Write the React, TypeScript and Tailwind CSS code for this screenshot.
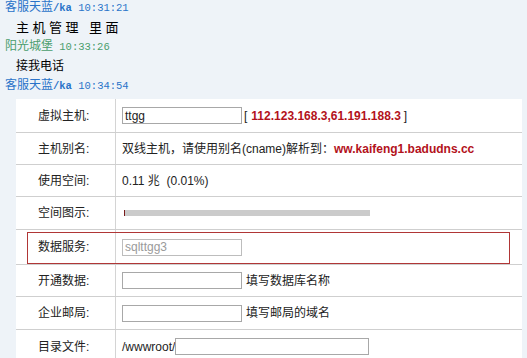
const cjk = "font-['Liberation_Sans','Noto_Sans_CJK_SC',sans-serif]";

const Field = ({ w, value, muted }: { w: string; value?: string; muted?: boolean }) => (
  <div
    className={`${w} h-[17px] bg-white border flex items-center px-[2px] text-[12px] leading-none ${
      muted ? "border-[#bdbdbd] text-[#9a9a9a]" : "border-[#a8a8a8] text-[#222]"
    }`}
  >
    {value}
  </div>
);

const Row = ({ label, h, children, last }: { label: string; h: string; children?: React.ReactNode; last?: boolean }) => (
  <div className={`grid grid-cols-[100px_1fr] ${h} ${last ? "" : "border-b border-[#cfcfcf]"}`}>
    <div className="flex items-center pl-[22px] border-r border-[#d4d4d4] text-[#222]">{label}</div>
    <div className="flex items-center pl-[6px] text-[#222]">{children}</div>
  </div>
);

export default function App() {
  return (
    <div className={`relative w-[527px] h-[358px] overflow-hidden bg-[#eef3f8] text-[12px] ${cjk}`}>
      <div className="-mt-[2px] leading-[19px]">
        <div className="pl-[5px] text-[#2a73c9]">
          客服天蓝<span className="font-['Liberation_Mono',monospace] text-[10.5px] font-bold">/ka</span>
          <span className="font-['Liberation_Mono',monospace] text-[10.5px]"> 10:31:21</span>
        </div>
        <div className="pl-[16px] text-[13px] tracking-[3.5px] text-black">主机管理 里面</div>
        <div className="pl-[5px] text-[#4a9d6c]">
          阳光城堡<span className="font-['Liberation_Mono',monospace] text-[10.5px]"> 10:33:26</span>
        </div>
        <div className="pl-[16px] text-black">接我电话</div>
        <div className="pl-[5px] text-[#2a73c9]">
          客服天蓝<span className="font-['Liberation_Mono',monospace] text-[10.5px] font-bold">/ka</span>
          <span className="font-['Liberation_Mono',monospace] text-[10.5px]"> 10:34:54</span>
        </div>
      </div>

      <div className="mt-[3px] ml-[16px] mr-[5px] bg-white">
        <Row label="虚拟主机:" h="h-[34px]">
          <Field w="w-[120px]" value="ttgg" />
          <span className="ml-[2px]">[</span>
          <span className="ml-[4px] font-bold text-[#b3121b]">112.123.168.3,61.191.188.3</span>
          <span className="ml-[3px]">]</span>
        </Row>
        <Row label="主机别名:" h="h-[32px]">
          <span>双线主机，请使用别名(cname)解析到：</span>
          <span className="font-bold text-[#b3121b]">ww.kaifeng1.badudns.cc</span>
        </Row>
        <Row label="使用空间:" h="h-[32px]">
          <span>0.11 兆 &nbsp;(0.01%)</span>
        </Row>
        <Row label="空间图示:" h="h-[33px]">
          <div className="ml-[2px] w-[246px] h-[6px] bg-[#cbcbcb] flex">
            <div className="w-[1px] h-full bg-[#7a1a1a]" />
          </div>
        </Row>
        <Row label="数据服务:" h="h-[35px]">
          <Field w="w-[120px]" value="sqlttgg3" muted />
        </Row>
        <Row label="开通数据:" h="h-[32px]">
          <Field w="w-[120px]" />
          <span className="ml-[4px]">填写数据库名称</span>
        </Row>
        <Row label="企业邮局:" h="h-[33px]">
          <Field w="w-[120px]" />
          <span className="ml-[4px]">填写邮局的域名</span>
        </Row>
        <Row label="目录文件:" h="h-[33px]" last>
          <span>/wwwroot/</span>
          <Field w="w-[194px]" />
        </Row>
      </div>

      <div className="absolute left-[27px] top-[232px] w-[483px] h-[32px] border border-[#b03636]" />
    </div>
  );
}
